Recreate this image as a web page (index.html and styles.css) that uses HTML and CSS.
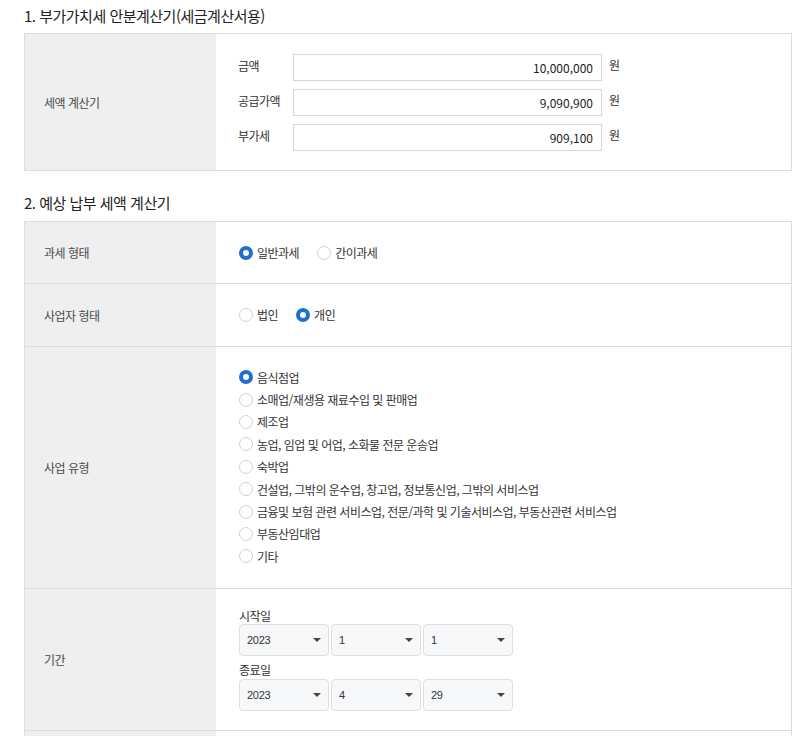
FILE: index.html
```html
<!DOCTYPE html>
<html lang="ko">
<head>
<meta charset="utf-8">
<title>부가가치세 계산기</title>
<link rel="stylesheet" href="styles.css">
</head>
<body>
<div class="page">
  <h2 class="sec-title first">1. 부가가치세 안분계산기(세금계산서용)</h2>
  <div class="panel">
    <div class="row">
      <div class="th">세액 계산기</div>
      <div class="td calc">
        <div class="field"><span class="flabel">금액</span><input class="num" type="text" value="10,000,000"><span class="unit">원</span></div>
        <div class="field"><span class="flabel">공급가액</span><input class="num" type="text" value="9,090,900"><span class="unit">원</span></div>
        <div class="field"><span class="flabel">부가세</span><input class="num" type="text" value="909,100"><span class="unit">원</span></div>
      </div>
    </div>
  </div>

  <h2 class="sec-title">2. 예상 납부 세액 계산기</h2>
  <div class="panel">
    <div class="row">
      <div class="th">과세 형태</div>
      <div class="td inline">
        <label class="opt"><input type="radio" name="tax" checked><span>일반과세</span></label>
        <label class="opt"><input type="radio" name="tax"><span>간이과세</span></label>
      </div>
    </div>
    <div class="row">
      <div class="th">사업자 형태</div>
      <div class="td inline">
        <label class="opt"><input type="radio" name="biz"><span>법인</span></label>
        <label class="opt"><input type="radio" name="biz" checked><span>개인</span></label>
      </div>
    </div>
    <div class="row">
      <div class="th">사업 유형</div>
      <div class="td list">
        <label class="opt"><input type="radio" name="type" checked><span>음식점업</span></label>
        <label class="opt"><input type="radio" name="type"><span>소매업/재생용 재료수입 및 판매업</span></label>
        <label class="opt"><input type="radio" name="type"><span>제조업</span></label>
        <label class="opt"><input type="radio" name="type"><span>농업, 임업 및 어업, 소화물 전문 운송업</span></label>
        <label class="opt"><input type="radio" name="type"><span>숙박업</span></label>
        <label class="opt"><input type="radio" name="type"><span>건설업, 그밖의 운수업, 창고업, 정보통신업, 그밖의 서비스업</span></label>
        <label class="opt"><input type="radio" name="type"><span>금융및 보험 관련 서비스업, 전문/과학 및 기술서비스업, 부동산관련 서비스업</span></label>
        <label class="opt"><input type="radio" name="type"><span>부동산임대업</span></label>
        <label class="opt"><input type="radio" name="type"><span>기타</span></label>
      </div>
    </div>
    <div class="row">
      <div class="th">기간</div>
      <div class="td period">
        <div class="dlabel">시작일</div>
        <div class="selects">
          <div class="sel"><select><option>2023</option></select></div>
          <div class="sel"><select><option>1</option></select></div>
          <div class="sel"><select><option>1</option></select></div>
        </div>
        <div class="dlabel second">종료일</div>
        <div class="selects">
          <div class="sel"><select><option>2023</option></select></div>
          <div class="sel"><select><option>4</option></select></div>
          <div class="sel"><select><option>29</option></select></div>
        </div>
      </div>
    </div>
    <div class="row">
      <div class="th"></div>
      <div class="td tall"></div>
    </div>
  </div>
</div>
</body>
</html>
```

FILE: styles.css
```css
html, body {
  margin: 0;
  padding: 0;
  background: #fff;
  overflow: hidden;
}

body {
  font-family: "Noto Sans CJK KR", "Noto Sans", sans-serif;
  color: #444;
  font-size: 12px;
  letter-spacing: -0.5px;
}

.page {
  width: 768px;
  margin-left: 24px;
}

.sec-title {
  font-size: 15px;
  font-weight: 400;
  color: #222;
  line-height: 22px;
  margin: 21px 0 7px;
  letter-spacing: -0.5px;
}

.sec-title.first {
  margin: 5px 0 6px;
}

.panel {
  border: 1px solid #dcdcdc;
}

.row {
  display: flex;
}

.row + .row {
  border-top: 1px solid #dcdcdc;
}

.th {
  width: 172px;
  flex: none;
  background: #efefef;
  padding: 0 0 0 19px;
  display: flex;
  align-items: center;
  font-size: 12px;
  color: #4a4a4a;
}

.td {
  flex: 1;
  padding: 0 22px;
  background: #fff;
}

/* 세액 계산기 */
.calc {
  padding-top: 20px;
  padding-bottom: 19px;
  display: flex;
  flex-direction: column;
  gap: 8px;
}

.field {
  display: flex;
  align-items: center;
  height: 27px;
}

.flabel {
  width: 55px;
  flex: none;
  color: #333;
  position: relative;
  top: -2px;
}

.num {
  box-sizing: border-box;
  width: 309px;
  height: 27px;
  border: 1px solid #d6d6d6;
  padding: 0 8px;
  margin: 0;
  text-align: right;
  font-family: "Noto Sans CJK KR", "Noto Sans", sans-serif;
  font-size: 12px;
  letter-spacing: 0;
  color: #222;
  background: #fff;
  outline: none;
}

.unit {
  margin-left: 7px;
  color: #333;
  position: relative;
  top: -3px;
}

/* radios */
.opt {
  display: flex;
  align-items: center;
  color: #333;
}

.opt input {
  appearance: none;
  -webkit-appearance: none;
  box-sizing: border-box;
  width: 14px;
  height: 14px;
  margin: 0 4px 0 1px;
  border: 1px solid #d2d2d2;
  border-radius: 50%;
  background: #fff;
  flex: none;
}

.opt input:checked {
  border: 4px solid #1f6fce;
}

.inline {
  display: flex;
  align-items: center;
  gap: 17px;
  padding-top: 20px;
  padding-bottom: 20px;
  min-height: 21px;
}

.row:nth-child(2) .inline {
  padding-bottom: 21px;
}

.list {
  padding-top: 19px;
  padding-bottom: 20px;
  display: flex;
  flex-direction: column;
}

.list .opt {
  height: 22.4px;
}

/* 기간 */
.period {
  padding-top: 19px;
  padding-bottom: 19px;
}

.dlabel {
  line-height: 16px;
  color: #333;
  padding-left: 1px;
}

.dlabel.second {
  margin-top: 5px;
  line-height: 18px;
}

.selects {
  display: flex;
  gap: 2px;
  padding-left: 1px;
}

.sel {
  position: relative;
  width: 90px;
}

.sel select {
  appearance: none;
  -webkit-appearance: none;
  box-sizing: border-box;
  width: 90px;
  height: 32px;
  margin: 0;
  border: 1px solid #dedede;
  border-radius: 4px;
  background: #f7f8fa;
  padding: 0 7px;
  font-family: "Liberation Sans", "Noto Sans", sans-serif;
  font-size: 11px;
  letter-spacing: -0.3px;
  color: #333;
  outline: none;
}

.sel::after {
  content: "";
  position: absolute;
  right: 8px;
  top: 14px;
  border-left: 4px solid transparent;
  border-right: 4px solid transparent;
  border-top: 4px solid #444;
  pointer-events: none;
}

.tall {
  height: 60px;
}
```
